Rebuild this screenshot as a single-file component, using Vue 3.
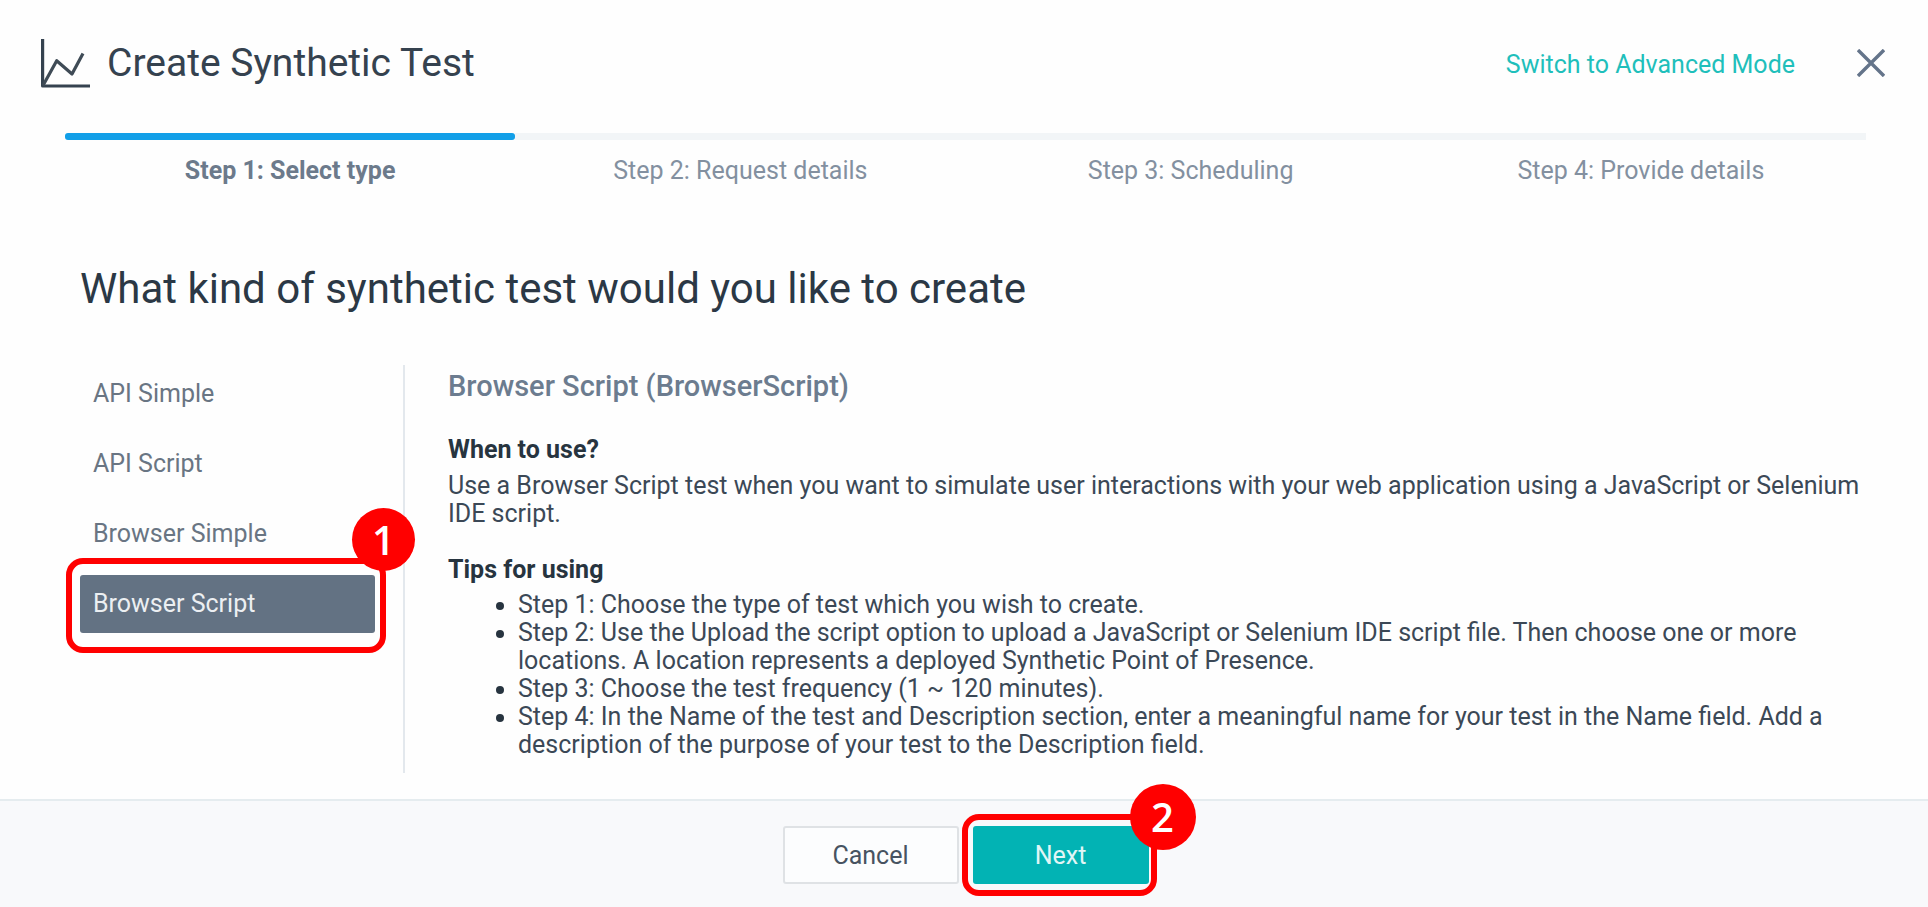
<script setup>
import { ref } from 'vue'

const steps = [
  'Step 1: Select type',
  'Step 2: Request details',
  'Step 3: Scheduling',
  'Step 4: Provide details',
]
const currentStep = ref(0)

const types = ['API Simple', 'API Script', 'Browser Simple', 'Browser Script']
const selected = ref('Browser Script')

const tips = [
  'Step 1: Choose the type of test which you wish to create.',
  'Step 2: Use the Upload the script option to upload a JavaScript or Selenium IDE script file. Then choose one or more locations. A location represents a deployed Synthetic Point of Presence.',
  'Step 3: Choose the test frequency (1 ~ 120 minutes).',
  'Step 4: In the Name of the test and Description section, enter a meaningful name for your test in the Name field. Add a description of the purpose of your test to the Description field.',
]
</script>

<template>
  <div class="dialog">
    <header class="top">
      <svg class="logo" viewBox="0 0 50 50" aria-hidden="true">
        <path d="M1.6 1V48H49" fill="none" stroke="#35424f" stroke-width="3.2" stroke-linejoin="round" />
        <path d="M2 47.5L15.7 22.7L31 36L42 15.5" fill="none" stroke="#3f4b56" stroke-width="3.2" stroke-linejoin="round" />
      </svg>
      <h1>Create Synthetic Test</h1>
      <a href="#advanced" class="switch">Switch to Advanced Mode</a>
      <button type="button" class="close" aria-label="Close">
        <svg viewBox="0 0 28 28" aria-hidden="true">
          <path d="M1 1L27 27M27 1L1 27" fill="none" stroke="#64748a" stroke-width="3.4" />
        </svg>
      </button>
    </header>

    <ol class="steps">
      <li v-for="(step, i) in steps" :key="step" :class="{ active: i === currentStep }">{{ step }}</li>
    </ol>

    <main>
      <h2>What kind of synthetic test would you like to create</h2>
      <div class="columns">
        <nav class="types">
          <div v-for="type in types" :key="type" class="type-row">
            <button
              type="button"
              class="type"
              :class="{ selected: type === selected }"
              @click="selected = type"
            >{{ type }}</button>
            <span v-if="type === 'Browser Script'" class="callout callout-type"><b>1</b></span>
          </div>
        </nav>
        <section class="details">
          <h3>Browser Script (BrowserScript)</h3>
          <h4>When to use?</h4>
          <p>Use a Browser Script test when you want to simulate user interactions with your web application using a JavaScript or Selenium IDE script.</p>
          <h4>Tips for using</h4>
          <ul>
            <li v-for="tip in tips" :key="tip">{{ tip }}</li>
          </ul>
        </section>
      </div>
    </main>

    <footer>
      <button type="button" class="action cancel">Cancel</button>
      <div class="next-wrap">
        <button type="button" class="action next">Next</button>
        <span class="callout callout-next"><b>2</b></span>
      </div>
    </footer>
  </div>
</template>

<style>
body {
  background: #fefefe;
}
</style>

<style scoped>
.dialog {
  box-sizing: border-box;
  min-height: 100vh;
  display: flex;
  flex-direction: column;
  font-family: Roboto, "Liberation Sans", sans-serif;
  font-size: 25px;
  line-height: 28px;
  color: #3b4856;
}
h1, h2, h3, h4, p, ul, ol {
  margin: 0;
  padding: 0;
}
button {
  font: inherit;
  margin: 0;
  cursor: pointer;
}
.top {
  display: flex;
  align-items: center;
  height: 50px;
  padding: 38px 43px 0 41px;
}
.logo {
  width: 50px;
  height: 50px;
  margin-right: 16px;
}
h1 {
  font-size: 39px;
  font-weight: 400;
  line-height: 50px;
  color: #35424f;
}
.switch {
  margin-left: auto;
  padding-top: 3px;
  color: #1fbfbb;
  text-decoration: none;
}
.close {
  display: flex;
  margin-left: 62px;
  padding: 0;
  border: 0;
  background: none;
}
.close svg {
  width: 28px;
  height: 28px;
}
.steps {
  display: grid;
  grid-template-columns: repeat(4, 1fr);
  margin: 45px 62px 0 65px;
  list-style: none;
  text-align: center;
  color: #8390a0;
}
.steps li::before {
  content: "";
  display: block;
  height: 7px;
  margin-bottom: 17px;
  background: #f2f5f7;
}
.steps .active {
  font-weight: 700;
  color: #6c7a8b;
}
.steps .active::before {
  border-radius: 3px;
  background: #129fe8;
}
main {
  flex: 1;
  padding: 80px 62px 22px 80px;
}
h2 {
  font-size: 42px;
  font-weight: 400;
  line-height: 48px;
  color: #2b3845;
}
.columns {
  display: flex;
  margin-top: 52px;
}
.types {
  box-sizing: border-box;
  flex: none;
  display: flex;
  flex-direction: column;
  gap: 12px;
  width: 325px;
  min-height: 408px;
  border-right: 2px solid #e3e8ed;
}
.type-row {
  position: relative;
  width: 295px;
}
.type {
  width: 100%;
  height: 58px;
  padding: 0 13px;
  border: 0;
  border-radius: 3px;
  background: none;
  color: #697583;
  text-align: left;
}
.type.selected {
  background: #637283;
  color: #eceff2;
}
.details {
  flex: 1;
  padding-left: 43px;
}
h3 {
  padding-top: 7px;
  font-size: 29px;
  font-weight: 500;
  line-height: 28px;
  color: #6c7c8f;
}
h4 {
  font-size: 25px;
  font-weight: 700;
  line-height: 28px;
  color: #27343f;
}
h3 + h4 {
  margin-top: 36px;
}
p {
  margin: 8px 0 28px;
}
ul {
  margin-top: 7px;
  padding-left: 70px;
}
ul li::marker {
  color: #27343f;
}
footer {
  display: flex;
  justify-content: center;
  gap: 14px;
  padding: 25px 0 23px 3px;
  border-top: 2px solid #e5ecef;
  background: #f8f9fb;
}
.action {
  box-sizing: border-box;
  width: 176px;
  height: 58px;
  padding: 2px 0 0;
  border-radius: 3px;
}
.cancel {
  border: 2px solid #dfe2e5;
  background: #fcfdfe;
  color: #475361;
}
.next-wrap {
  position: relative;
}
.next {
  border: 0;
  background: #02b3b4;
  color: #e2f6f6;
}
/* Numbered outlines that lie over the controls */
.callout {
  position: absolute;
  border: 6px solid #ff0000;
  border-radius: 17px;
  pointer-events: none;
}
.callout b {
  position: absolute;
  display: flex;
  align-items: center;
  justify-content: center;
  border-radius: 50%;
  background: #ff0000;
  color: #fff;
  font-family: "Open Sans", "Noto Sans", sans-serif;
  font-size: 40px;
  font-weight: 600;
}
.callout-type {
  inset: -17px -11px -20px -14px;
}
.callout-type b {
  top: -56px;
  right: -35px;
  width: 63px;
  height: 63px;
}
.callout-next {
  inset: -12px -8px -12px -11px;
}
.callout-next b {
  top: -36px;
  right: -45px;
  width: 66px;
  height: 66px;
}
</style>
